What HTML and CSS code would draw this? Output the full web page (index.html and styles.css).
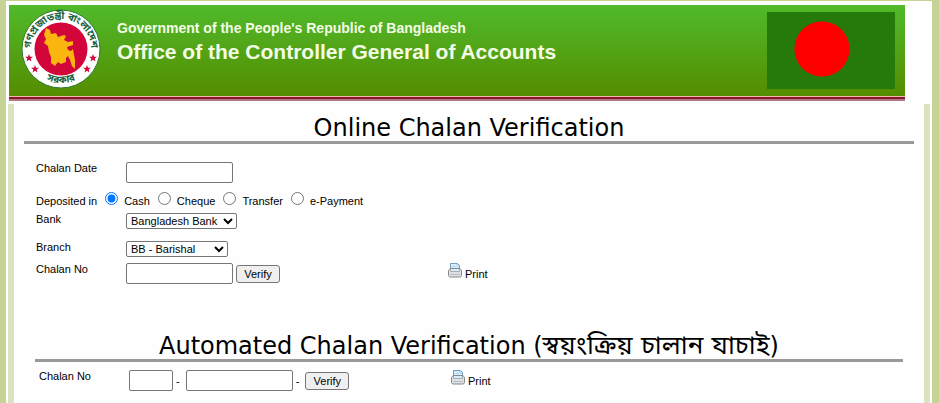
FILE: index.html
```
<!DOCTYPE html>
<html lang="en">

<head>
    <meta charset="UTF-8">
    <meta name="viewport" content="width=device-width, initial-scale=1.0">
    <title>Online Chalan Verification</title>
    <link rel="stylesheet" href="styles.css">
</head>

<body>
    <div class="page">
        <header class="banner">
            <svg class="seal" viewBox="0 0 80 80" role="img" aria-label="Government seal">
                <defs>
                    <path id="arc-top" d="M14 55 A30 30 0 1 1 66 55" />
                    <path id="arc-bottom" d="M12 60 A35 35 0 0 0 68 60" />
                    <path id="star" d="M0-4 L1-1.300 4-1.200 1.700.6 2.400 3.500 0 1.800 -2.400 3.500 -1.700.6 -4-1.200 -1-1.300Z" />
                </defs>
                <circle cx="40" cy="40" r="39" fill="#fff" stroke="#2f7a35" stroke-width="1" />
                <circle cx="40" cy="40" r="26.5" fill="#d3063c" />
                <path fill="#fbb50f" d="M25 19 L29 21 30 25 35 24 37 28 43 26 45 27 43 31 47 33 52 32 52 36 46 38 47 41 50 42 52 40 53 46 54 51 54 60 51 57 49 51 47 47 45 49 45 53 40 55 37 53 34 57 30 54 30 48 28 43 27 37 23 34 25 30 23 26Z" />
                <g class="seal-text">
                    <text><textPath href="#arc-top" startOffset="50%">গণপ্রজাতন্ত্রী বাংলাদেশ</textPath></text>
                    <text><textPath href="#arc-bottom" startOffset="50%">সরকার</textPath></text>
                </g>
                <g fill="#d3063c">
                    <use href="#star" x="8" y="49" />
                    <use href="#star" x="14" y="60" />
                    <use href="#star" x="72" y="49" />
                    <use href="#star" x="66" y="60" />
                </g>
            </svg>
            <div class="banner-text">
                <p>Government of the People's Republic of Bangladesh</p>
                <h1>Office of the Controller General of Accounts</h1>
            </div>
            <div class="flag"></div>
        </header>

        <main class="panel">
            <section class="online">
                <h2>Online Chalan Verification</h2>
                <form class="chalan-form">
                    <div class="row date-row">
                        <label for="date">Chalan Date</label>
                        <input type="text" id="date" class="text-box">
                    </div>
                    <div class="row radio-row" role="radiogroup" aria-labelledby="deposited">
                        <span id="deposited">Deposited in</span>
                        <input type="radio" name="deposit" id="cash" checked>
                        <label for="cash">Cash</label>
                        <input type="radio" name="deposit" id="cheque">
                        <label for="cheque">Cheque</label>
                        <input type="radio" name="deposit" id="transfer">
                        <label for="transfer">Transfer</label>
                        <input type="radio" name="deposit" id="epayment">
                        <label for="epayment">e-Payment</label>
                    </div>
                    <div class="row select-row">
                        <label for="bank">Bank</label>
                        <select id="bank" class="bank">
                            <option>Bangladesh Bank</option>
                        </select>
                    </div>
                    <div class="row select-row">
                        <label for="branch">Branch</label>
                        <select id="branch" class="branch">
                            <option>BB - Barishal</option>
                        </select>
                    </div>
                    <div class="row">
                        <label for="chalan">Chalan No</label>
                        <div class="fields">
                            <input type="text" id="chalan" class="text-box">
                            <button type="button">Verify</button>
                        </div>
                        <a href="#" class="print">
                            <svg viewBox="0 0 14 15" aria-hidden="true">
                                <path d="M2.500 7V.5h7l2 2V7z" fill="#d7edfb" stroke="#6d9cc2" />
                                <path d="M9 1v2h2M4.500 3.500h3M4.500 5.500h5" fill="none" stroke="#a9cde8" />
                                <path d="M.5 7.500 2 5.500h10l1.500 2v5l-1 1.500h-11l-1-1.500z" fill="#dfe1e5" stroke="#85888f" />
                                <path d="M2.500 6v2.500h9V6" fill="#d7edfb" stroke="#a7abb2" />
                                <path d="M2 11.500h10" stroke="#b9bcc2" />
                            </svg>
                            <span>Print</span>
                        </a>
                    </div>
                </form>
            </section>

            <section class="automated">
                <h2>Automated Chalan Verification (<span lang="bn">স্বয়ংক্রিয় চালান যাচাই</span>)</h2>
                <form class="auto-form">
                    <div class="row">
                        <label for="code">Chalan No</label>
                        <div class="fields">
                            <input type="text" id="code" class="text-box code">
                            <span>-</span>
                            <input type="text" class="text-box number" aria-label="Chalan number">
                            <span>-</span>
                            <button type="button">Verify</button>
                        </div>
                        <a href="#" class="print">
                            <svg viewBox="0 0 14 15" aria-hidden="true">
                                <path d="M2.500 7V.5h7l2 2V7z" fill="#d7edfb" stroke="#6d9cc2" />
                                <path d="M9 1v2h2M4.500 3.500h3M4.500 5.500h5" fill="none" stroke="#a9cde8" />
                                <path d="M.5 7.500 2 5.500h10l1.500 2v5l-1 1.500h-11l-1-1.500z" fill="#dfe1e5" stroke="#85888f" />
                                <path d="M2.500 6v2.500h9V6" fill="#d7edfb" stroke="#a7abb2" />
                                <path d="M2 11.500h10" stroke="#b9bcc2" />
                            </svg>
                            <span>Print</span>
                        </a>
                    </div>
                </form>
            </section>
        </main>
    </div>
</body>

</html>
```
FILE: styles.css
```
* {
    box-sizing: border-box;
}

body {
    margin: 0;
    font-family: "Liberation Sans", Arial, sans-serif;
    font-size: 11px;
    line-height: 12px;
    color: #000;
    background: #fefefe;
}

h1,
h2,
p {
    margin: 0;
}

.page {
    display: flex;
    flex-direction: column;
    min-height: 100vh;
    padding: 4px 2px 0;
    border: solid #c5d396;
    border-width: 1px 7px 0 6px;
}

/* header */
.banner {
    display: flex;
    align-items: flex-start;
    height: 96px;
    margin: 0 25px 0 1px;
    padding: 7px 10px 0 12px;
    color: #f4fce6;
    background: linear-gradient(#f5b5a8, #f5b5a8) 0 91px / 100% 1px no-repeat,
        linear-gradient(#86182c, #86182c) 0 92px / 100% 2px no-repeat,
        linear-gradient(#b07886, #b07886) 0 94px / 100% 2px no-repeat,
        linear-gradient(#4fba2b, #558d00 91px);
}

.seal {
    flex: none;
    width: 80px;
    height: 80px;
    margin-top: -3px;
}

.seal-text {
    font-family: "Noto Sans Bengali", "Liberation Sans", sans-serif;
    font-size: 10px;
    font-weight: bold;
    text-anchor: middle;
    fill: #17603a;
}

.banner-text {
    flex: 1;
    margin-left: 16px;
    padding-top: 8px;
}

.banner-text p {
    font-size: 14px;
    font-weight: bold;
    line-height: 16px;
}

.banner-text h1 {
    font-size: 21px;
    line-height: 32px;
}

.flag {
    flex: none;
    width: 128px;
    height: 77px;
    background: radial-gradient(circle at 55px 37px, #fe0000 27px, #267a0c 28px);
}

/* content */
.panel {
    flex: 1;
    margin-top: 3px;
    border: solid #dae3be;
    border-width: 0 6px;
}

h2 {
    padding-top: 2px;
    font-family: Verdana, "DejaVu Sans", "Noto Sans Bengali", sans-serif;
    font-size: 24px;
    font-weight: normal;
    line-height: 26px;
    text-align: center;
    border-bottom: 3px solid #999;
}

h2 span {
    font-size: 26px;
    line-height: 16px;
}

.online {
    margin: 9px 10px 0;
}

.automated {
    margin: 47px 21px 0;
}

.chalan-form {
    padding: 18px 0 0 12px;
}

.auto-form {
    padding: 8px 0 0 4px;
}

.row {
    display: flex;
    align-items: flex-start;
}

.row > label:first-child {
    flex: none;
    width: 90px;
}

.date-row {
    height: 30px;
}

.select-row {
    height: 28px;
}

.select-row:nth-child(4) {
    height: 22px;
}

.radio-row {
    height: 21px;
}

.radio-row span,
.radio-row label {
    padding-top: 3px;
}

.radio-row input {
    width: 13px;
    height: 13px;
    margin: 0 6px 0 8px;
}

.text-box {
    width: 107px;
    height: 21px;
    padding: 1px 2px;
    font: inherit;
    background: #fff;
    border: 1px solid #767676;
    border-radius: 2px;
}

.code {
    width: 44px;
}

select {
    height: 16px;
    padding: 0;
    font: inherit;
    line-height: 14px;
    background: #fff;
    border: 1px solid #767676;
    border-radius: 2px;
}

.bank {
    width: 111px;
}

.branch {
    width: 102px;
}

.fields {
    display: flex;
    align-items: center;
    gap: 3px;
    width: 322px;
}

.auto-form .number,
.auto-form button {
    margin-left: 3px;
}

button {
    width: 44px;
    height: 18px;
    padding: 0;
    font: inherit;
    color: #000;
    background: #efefef;
    border: 1px solid #767676;
    border-radius: 3px;
}

.print {
    display: flex;
    align-items: flex-end;
    gap: 3px;
    line-height: 14px;
    color: #000;
    text-decoration: none;
}

.print svg {
    width: 14px;
    height: 15px;
    margin-bottom: 3px;
}
```
